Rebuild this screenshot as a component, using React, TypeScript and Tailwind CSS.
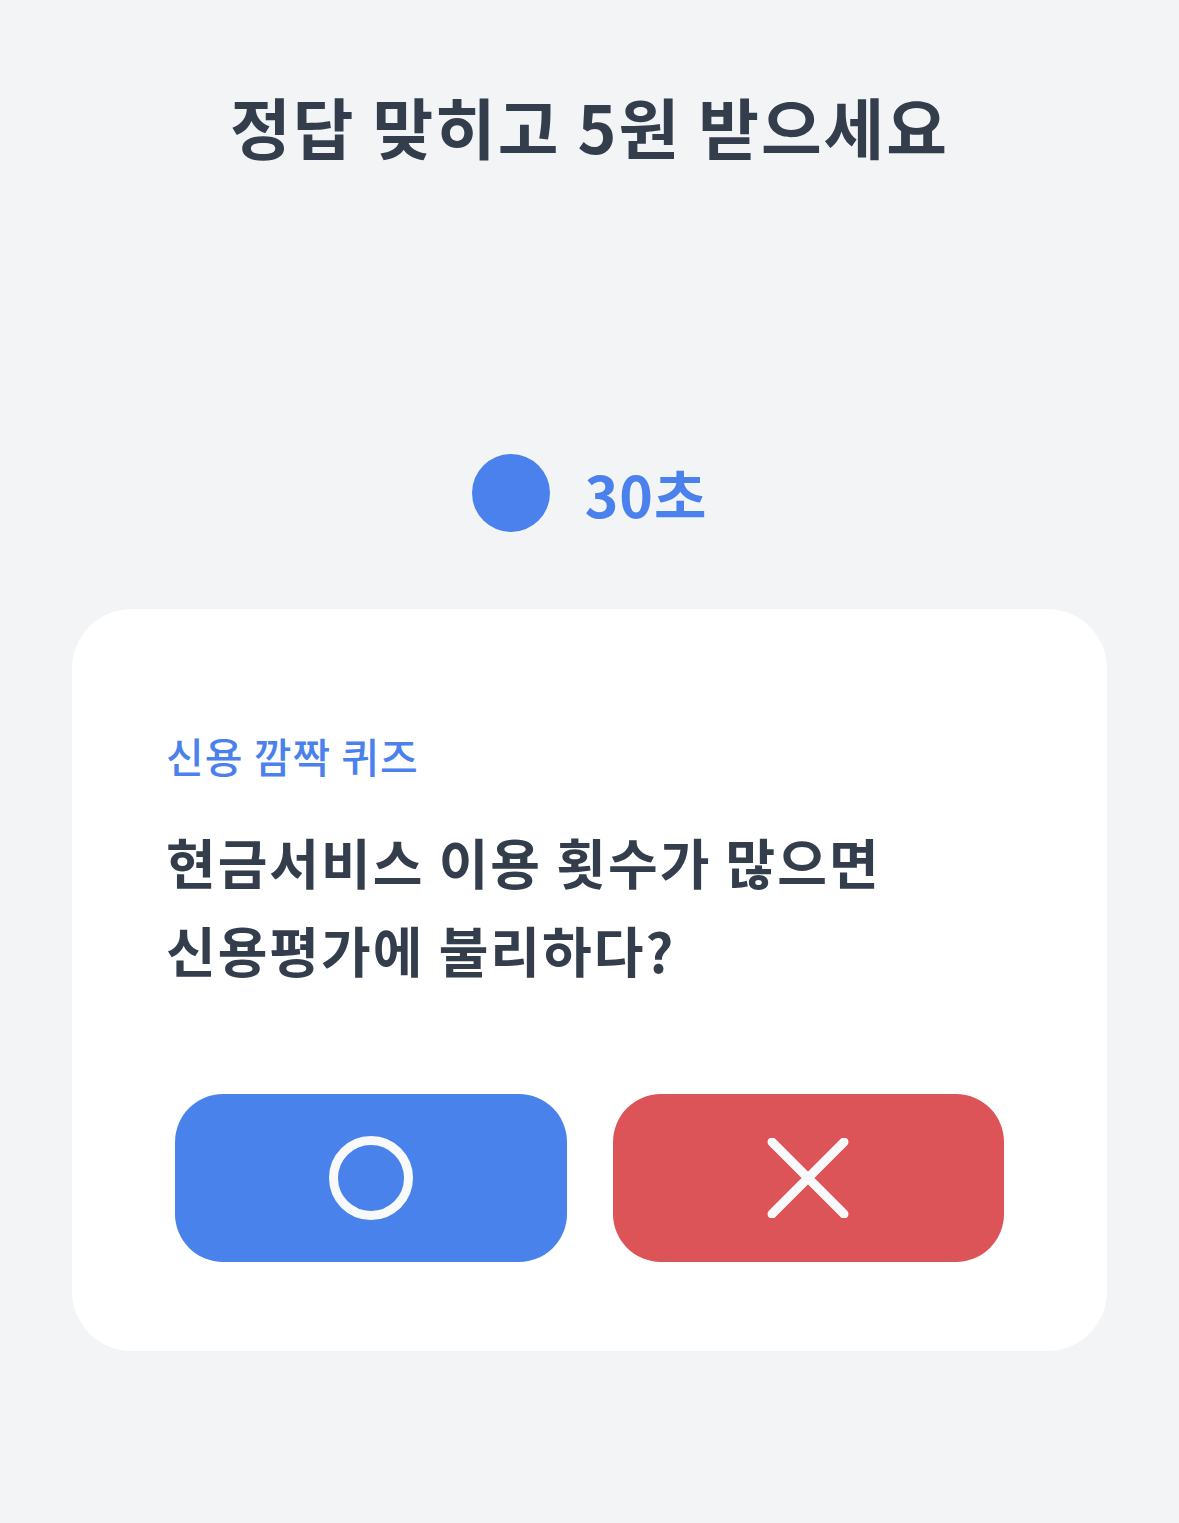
const font = { fontFamily: '"Noto Sans CJK KR", "Noto Sans", sans-serif' };

function CircleIcon() {
  return (
    <svg width="88" height="88" viewBox="0 0 88 88" fill="none">
      <circle cx="44" cy="44" r="37.5" stroke="#f8f9fb" strokeWidth="9" />
    </svg>
  );
}

function CrossIcon() {
  return (
    <svg width="84" height="80" viewBox="0 0 84 80" fill="none">
      <path d="M6 4 L78 76 M78 4 L6 76" stroke="#f8f9fb" strokeWidth="9" strokeLinecap="round" />
    </svg>
  );
}

export default function App() {
  return (
    <div className="min-h-[1523px] w-full bg-[#f2f4f6] flex flex-col pt-[92px]" style={font}>
      {/* heading */}
      <h1 className="text-center text-[66px] leading-[66px] font-bold text-[#333d4b] tracking-[2px]">
        정답 맞히고 5원 받으세요
      </h1>

      {/* timer */}
      <div className="mt-[296px] flex items-center justify-center gap-[35px]">
        <div className="w-[78px] h-[78px] rounded-full bg-[#4a81ec]" />
        <span className="text-[57px] leading-[78px] font-bold text-[#4a81ec] tracking-[1px]">30초</span>
      </div>

      {/* quiz card */}
      <div className="mt-[77px] mx-[72px] bg-white rounded-[60px] pt-[126px] pb-[89px]">
        <div className="px-[94px]">
          <p className="text-[41px] leading-[40px] font-medium text-[#4a81ec] tracking-[1px]">신용 깜짝 퀴즈</p>
          <p className="mt-[43px] text-[54px] leading-[88px] font-bold text-[#333d4b] tracking-[2px]">
            현금서비스 이용 횟수가 많으면
            <br />
            신용평가에 불리하다?
          </p>
        </div>
        <div className="mt-[100px] px-[103px] grid grid-cols-2 gap-[46px]">
          <button className="h-[168px] rounded-[48px] bg-[#4a82ec] flex items-center justify-center">
            <CircleIcon />
          </button>
          <button className="h-[168px] rounded-[48px] bg-[#dc5358] flex items-center justify-center">
            <CrossIcon />
          </button>
        </div>
      </div>
    </div>
  );
}
